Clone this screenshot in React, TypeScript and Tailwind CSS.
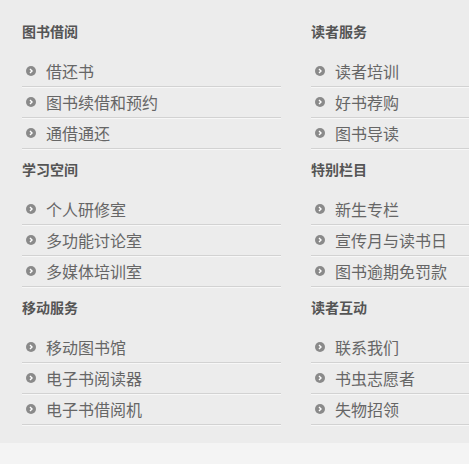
type Section = {
  title: string;
  items: string[];
};

const leftSections: Section[] = [
  { title: "图书借阅", items: ["借还书", "图书续借和预约", "通借通还"] },
  { title: "学习空间", items: ["个人研修室", "多功能讨论室", "多媒体培训室"] },
  { title: "移动服务", items: ["移动图书馆", "电子书阅读器", "电子书借阅机"] },
];

const rightSections: Section[] = [
  { title: "读者服务", items: ["读者培训", "好书荐购", "图书导读"] },
  { title: "特别栏目", items: ["新生专栏", "宣传月与读书日", "图书逾期免罚款"] },
  { title: "读者互动", items: ["联系我们", "书虫志愿者", "失物招领"] },
];

function Bullet() {
  return (
    <span className="flex h-[10px] w-[10px] shrink-0 items-center justify-center rounded-full bg-[#8a8a8a]">
      <svg width="6" height="6" viewBox="0 0 6 6">
        <path d="M2 1 L4 3 L2 5" fill="none" stroke="#ffffff" strokeWidth="1.4" />
      </svg>
    </span>
  );
}

function MenuSection({ section }: { section: Section }) {
  return (
    <div className="pb-[10px]">
      <h3 className="h-[20px] text-[14px] font-bold leading-[20px] text-[#555]">
        {section.title}
      </h3>
      <ul className="mt-[15px]">
        {section.items.map((item) => (
          <li
            key={item}
            className="flex h-[31px] items-center gap-[10px] border-b border-[#d2d2d2] pl-[4px] shadow-[0_1px_0_#f7f7f7]"
          >
            <Bullet />
            <span className="text-[16px] leading-[30px] text-[#666]">{item}</span>
          </li>
        ))}
      </ul>
    </div>
  );
}

export default function App() {
  return (
    <div
      className="h-[464px] w-[469px] overflow-hidden bg-[#f4f4f4]"
      style={{ fontFamily: '"Noto Sans CJK SC", "Noto Sans", sans-serif' }}
    >
      <div className="flex gap-[30px] bg-[#ececec] pb-[8px] pl-[22px] pt-[21px]">
        <div className="w-[259px] shrink-0">
          {leftSections.map((s) => (
            <MenuSection key={s.title} section={s} />
          ))}
        </div>
        <div className="w-[259px] shrink-0">
          {rightSections.map((s) => (
            <MenuSection key={s.title} section={s} />
          ))}
        </div>
      </div>
    </div>
  );
}
